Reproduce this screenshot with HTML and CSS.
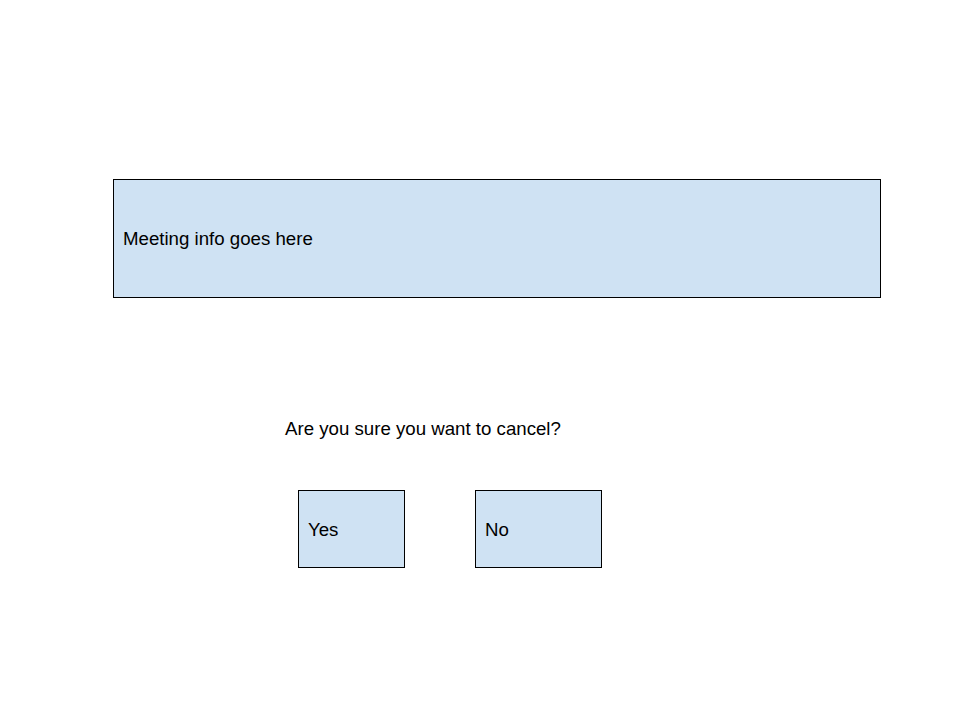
FILE: index.html
```html
<!DOCTYPE html>
<html lang="en">
<head>
<meta charset="utf-8">
<title>Cancel meeting</title>
<link rel="stylesheet" href="styles.css">
</head>
<body>
<main class="page">
  <section class="meeting">Meeting info goes here</section>
  <p class="question">Are you sure you want to cancel?</p>
  <div class="actions">
    <button class="btn btn-yes" type="button">Yes</button>
    <button class="btn btn-no" type="button">No</button>
  </div>
</main>
</body>
</html>
```
FILE: styles.css
```css
* { box-sizing: border-box; }
html, body { margin: 0; padding: 0; background: #ffffff; }
body {
  font-family: "Liberation Sans", Arial, sans-serif;
  font-size: 18.67px;
  color: #000000;
  width: 960px;
  height: 720px;
  overflow: hidden;
}
.page {
  display: flex;
  flex-direction: column;
  align-items: flex-start;
  padding-top: 179px;
}
.meeting {
  margin-left: 113px;
  width: 768px;
  height: 119px;
  background: #cfe2f3;
  border: 1px solid #000000;
  display: flex;
  align-items: center;
  padding-left: 9px;
  line-height: 21px;
}
.question {
  margin: 120px 0 0 285px;
  line-height: 21px;
}
.actions {
  margin: 51px 0 0 298px;
  display: flex;
  gap: 70px;
}
.btn {
  font: inherit;
  color: inherit;
  height: 78px;
  background: #cfe2f3;
  border: 1px solid #000000;
  border-radius: 0;
  display: flex;
  align-items: center;
  padding: 1px 0 0 9px;
  line-height: 21px;
  margin: 0;
}
.btn-yes { width: 107px; }
.btn-no { width: 127px; }
```
